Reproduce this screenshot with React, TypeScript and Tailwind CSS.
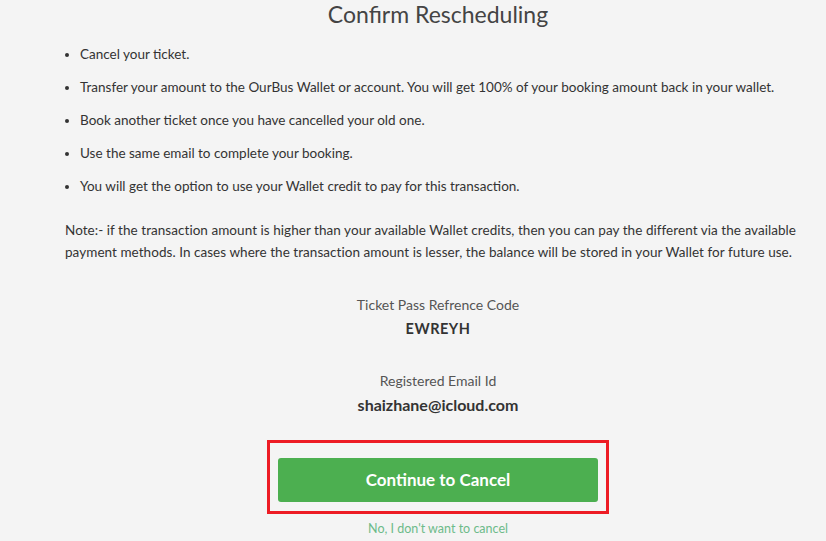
const bullets = [
  "Cancel your ticket.",
  "Transfer your amount to the OurBus Wallet or account. You will get 100% of your booking amount back in your wallet.",
  "Book another ticket once you have cancelled your old one.",
  "Use the same email to complete your booking.",
  "You will get the option to use your Wallet credit to pay for this transaction.",
];

const App: React.FC = () => {
  return (
    <div className="min-h-[541px] w-full bg-[#f4f4f4] font-['Lato',sans-serif] text-[#333]">
      <div className="ml-[50px] px-[15px]">
        <h2 className="text-center text-[23px] leading-[28px] text-[#444]">Confirm Rescheduling</h2>
        <ul className="mt-[16px] list-disc pl-[15px] text-[13.5px] leading-[20px]">
          {bullets.map((b) => (
            <li key={b} className="mb-[13px]">
              {b}
            </li>
          ))}
        </ul>
        <p className="mt-[23px] text-[13.5px] leading-[22px] tracking-[0.05px]">
          Note:- if the transaction amount is higher than your available Wallet credits, then you can pay the different
          via the available payment methods. In cases where the transaction amount is lesser, the balance will be stored
          in your Wallet for future use.
        </p>
        <div className="mt-[32px] flex flex-col items-center">
          <div className="text-[14px] leading-[20px] text-[#555]">Ticket Pass Refrence Code</div>
          <div className="mt-[4px] text-[14.5px] font-bold leading-[20px] tracking-[0.5px]">EWREYH</div>
          <div className="mt-[32px] text-[14px] leading-[20px] text-[#555]">Registered Email Id</div>
          <div className="mt-[4px] text-[16px] font-bold leading-[20px]">shaizhane@icloud.com</div>
          <div className="mt-[25px] border-[3px] border-[#ed1c24] px-[8px] pb-[9px] pt-[15px]">
            <button className="h-[44px] w-[320px] rounded-[3px] bg-[#4caf50] text-[17px] font-bold text-white">
              Continue to Cancel
            </button>
          </div>
          <a className="mt-[7px] text-[12.5px] leading-[16px] text-[#6dbb8a]">No, I don't want to cancel</a>
        </div>
      </div>
    </div>
  );
};

export default App;
